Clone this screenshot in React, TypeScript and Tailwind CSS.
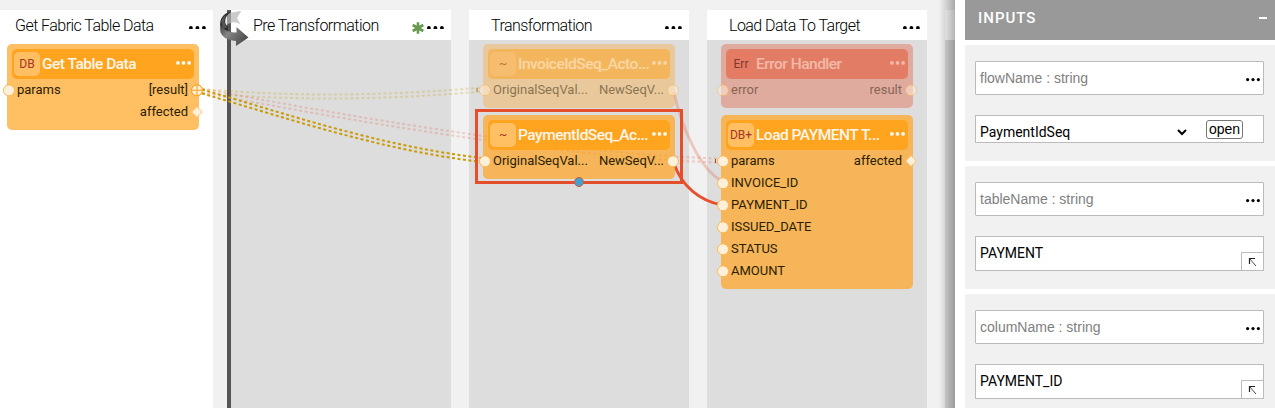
import React from "react";

type Port = { name: string; kind?: "circle" | "diamond" | "plus" };
type NodeProps = {
  badge: string;
  title: string;
  inputs: Port[];
  outputs: Port[];
  tone?: "orange" | "red";
  faded?: boolean;
};

function Dots({ className, r = 2, gap = 6 }: { className?: string; r?: number; gap?: number }) {
  const w = gap * 2 + r * 2;
  return (
    <svg className={className} width={w} height={r * 2} viewBox={`0 0 ${w} ${r * 2}`} fill="currentColor">
      <circle cx={r} cy={r} r={r} />
      <circle cx={r + gap} cy={r} r={r} />
      <circle cx={r + gap * 2} cy={r} r={r} />
    </svg>
  );
}

function PortMark({ kind = "circle" }: { kind?: Port["kind"] }) {
  return (
    <svg width="14" height="14" viewBox="0 0 14 14" className="shrink-0">
      {kind === "diamond" ? (
        <path d="M7 1.6 12.4 7 7 12.4 1.6 7Z" fill="#fff0dc" stroke="#ffb74e" strokeWidth="0.8" />
      ) : (
        <circle cx="7" cy="7.3" r="5.5" fill="#fff0dc" stroke="#ffb74e" strokeWidth="1" />
      )}
      {kind === "plus" && (
        <>
          <circle cx="7" cy="7.3" r="5.5" stroke="#ffa41f" fill="none" />
          <path d="M7 1.8V12.8M1.5 7.3H12.5" stroke="#ffa41f" strokeWidth="1.1" />
        </>
      )}
    </svg>
  );
}

const bodyFill = {
  orange: { solid: "bg-[rgba(255,164,31,0.7)]", faded: "bg-[rgba(255,164,31,0.35)]" },
  red: { solid: "bg-[rgba(229,78,43,0.7)]", faded: "bg-[rgba(229,78,43,0.35)]" },
};
const headFill = {
  orange: { solid: "bg-[#ffa41f]", faded: "bg-[rgba(255,164,31,0.5)]" },
  red: { solid: "bg-[#e54e2b]", faded: "bg-[rgba(229,78,43,0.5)]" },
};

function FlowNode({ badge, title, inputs, outputs, tone = "orange", faded }: NodeProps) {
  const state = faded ? "faded" : "solid";
  const dim = faded ? "opacity-50" : "";
  return (
    <div className={`relative z-10 w-[192px] rounded-[5px] px-[5px] pt-[5.5px] pb-[6.5px] ${bodyFill[tone][state]}`}>
      <div className={`flex h-[30px] items-center rounded-[5px] pl-[2px] pr-[3px] ${headFill[tone][state]}`}>
        <div
          className={`flex h-[24px] w-[26px] shrink-0 items-center justify-center rounded-[5px] text-[12px] ${
            tone === "red"
              ? "bg-[#ef7c60]/30 text-[#7c3a30]"
              : faded
                ? "bg-white/10 text-[#c4703a]"
                : "bg-white/30 text-[#a5352c]"
          }`}
        >
          {badge}
        </div>
        <div
          className={`ml-[2px] flex-1 whitespace-nowrap text-[15.5px] font-medium leading-[20px] tracking-[-0.5px] text-[#fff6ea] ${dim}`}
        >
          {title}
        </div>
        <Dots className={`mb-[2px] shrink-0 text-[#fff6ea] ${dim}`} r={1.9} gap={5.6} />
      </div>
      <div className={`-mx-[11px] flex justify-between text-[13px] leading-[22px] text-[#2b1d08] ${dim}`}>
        <div>
          {inputs.map((p) => (
            <div key={p.name} className="flex h-[22px] items-center gap-[1.5px] pl-[0.5px]">
              <PortMark kind={p.kind} />
              <span>{p.name}</span>
            </div>
          ))}
        </div>
        <div>
          {outputs.map((p) => (
            <div key={p.name} className="flex h-[22px] items-center justify-end gap-[2px] pr-[1px]">
              <span>{p.name}</span>
              <PortMark kind={p.kind} />
            </div>
          ))}
        </div>
      </div>
    </div>
  );
}

function Column({
  title,
  white,
  flagged,
  className,
  children,
}: {
  title: string;
  white?: boolean;
  flagged?: boolean;
  className?: string;
  children?: React.ReactNode;
}) {
  return (
    <div className={`flex w-[220px] shrink-0 flex-col ${white ? "bg-white" : "bg-[#ddd]"} ${className ?? ""}`}>
      <div className="flex h-[30px] shrink-0 items-center bg-white pl-[22px] pr-[7px] text-[16px] font-light tracking-[-0.54px] text-black">
        <span className="mt-[2px] flex-1 whitespace-nowrap">{title}</span>
        {flagged && (
          <svg width="14" height="14" viewBox="0 0 14 14" className="mr-[2px] mt-[6px]">
            <path d="M7 1.2V12.8M1.7 4 12.3 10M12.3 4 1.7 10" stroke="#67994f" strokeWidth="2.6" />
          </svg>
        )}
        <Dots className="mt-[5px] text-black" r={1.9} gap={6.5} />
      </div>
      <div className="flex flex-col gap-[7px] pl-[14px] pt-[3.5px]">{children}</div>
    </div>
  );
}

function Wires() {
  return (
    <svg className="pointer-events-none absolute left-0 top-0 z-[5]" width="955" height="408" fill="none">
      <g stroke="#c99b00" strokeWidth="2" strokeDasharray="3 2.5" opacity="0.25">
        <path d="M202 89C300 97.5 390 95.5 482 87.5" />
        <path d="M202 93C300 101.5 390 99.5 482 91.5" />
      </g>
      <g stroke="#e54e2b" strokeWidth="2" strokeDasharray="3 2.5" opacity="0.22">
        <path d="M202 88.5C330 113 560 154 719 158.5" />
        <path d="M202 92.5C330 117 560 158 719 162.5" />
      </g>
      <g stroke="#c99b00" strokeWidth="2" strokeDasharray="3 2.5">
        <path d="M202 89.5C290 115 380 146 482 158" />
        <path d="M202 93.5C290 119 380 150 482 162" />
      </g>
      <path d="M477 88v4" stroke="#9b8030" strokeWidth="1" />
      <path d="M715.5 159v4" stroke="#b04030" strokeWidth="1" />
      <path d="M674 92C681 126 700 170 722 181" stroke="#e54e2b" strokeWidth="3" opacity="0.25" />
      <path d="M674 163C681 186 700 201 722 205" stroke="#e84f2c" strokeWidth="2.8" />
    </svg>
  );
}

function LoopArrow() {
  return (
    <svg className="absolute left-[219px] top-[9px] z-20" width="31" height="38" viewBox="0 0 31 38">
      <defs>
        <linearGradient id="ribbon" x1="0" y1="0" x2="1" y2="0.6">
          <stop offset="0" stopColor="#3a3a3a" />
          <stop offset="0.4" stopColor="#858585" />
          <stop offset="1" stopColor="#4c4c4c" />
        </linearGradient>
      </defs>
      <path d="M22.3 2C17 3 12 3 8 5L8 16C12 12.5 17 12.5 21.5 15.5L18 9Z" fill="#b5b5b5" opacity="0.7" />
      <path d="M12 3C4 4 0.8 10 1.2 16C2.5 20 6 22 9 22L9 17.5C5 15 4.5 8 12 3Z" fill="#2f2f2f" />
      <path d="M2.2 12.5C2.6 10 4.5 7.5 7 6L5 12 8 19 4 19Z" fill="#555" />
      <path d="M1.2 14C3 20 9 24 17.5 23.5V18L29.5 28.5 17 37V32C7 31 1.5 27 1.2 21Z" fill="url(#ribbon)" />
    </svg>
  );
}

function InputGroup({ label, children }: { label: string; children: React.ReactNode }) {
  return (
    <section className="bg-[#f1f1f1] pl-[10px] pr-[11px] pt-4">
      <div className="mb-5 flex h-[34px] items-center justify-between rounded-[1px] border border-[#bbb] bg-white pl-1 pr-[3px] font-['Liberation_Sans',sans-serif] text-[14px] text-[#808080]">
        <span>{label}</span>
        <Dots className="mt-1 text-black" r={1.6} gap={5.4} />
      </div>
      {children}
    </section>
  );
}

function TextInput({ value }: { value: string }) {
  return (
    <div className="flex h-[35px] justify-between border border-[#bbb] bg-white pl-1">
      <span className="self-center text-[14px] text-black">{value}</span>
      <span className="flex h-[18px] w-[22px] items-center justify-center self-end border-l border-t border-[#bbb]">
        <svg width="9" height="10" viewBox="0 0 9 10" fill="none" stroke="#222">
          <path d="M1.5 7V1.5H7" strokeWidth="1.2" />
          <path d="M1.5 1.5 8 9" strokeWidth="0.8" />
        </svg>
      </span>
    </div>
  );
}

export default function App() {
  return (
    <div className="flex h-[408px] w-[1275px] overflow-hidden bg-white font-[Roboto,sans-serif]">
      <main className="relative flex w-[955px] shrink-0 overflow-hidden bg-[#f1f1f1] pt-[10px]">
        <Column title="Get Fabric Table Data" white className="-ml-[7px]">
          <FlowNode
            badge="DB"
            title="Get Table Data"
            inputs={[{ name: "params" }]}
            outputs={[{ name: "[result]", kind: "plus" }, { name: "affected", kind: "diamond" }]}
          />
        </Column>
        <div className="ml-[14px] w-1 shrink-0 bg-[#555]" />
        <Column title="Pre Transformation" flagged />
        <Column title="Transformation" className="ml-[18px]">
          <FlowNode
            badge="~"
            title="InvoiceIdSeq_Acto..."
            faded
            inputs={[{ name: "OriginalSeqVal..." }]}
            outputs={[{ name: "NewSeqV..." }]}
          />
          <FlowNode
            badge="~"
            title="PaymentIdSeq_Ac..."
            inputs={[{ name: "OriginalSeqVal..." }]}
            outputs={[{ name: "NewSeqV..." }]}
          />
        </Column>
        <Column title="Load Data To Target" className="ml-[18px]">
          <FlowNode
            badge="Err"
            title="Error Handler"
            tone="red"
            faded
            inputs={[{ name: "error" }]}
            outputs={[{ name: "result" }]}
          />
          <FlowNode
            badge="DB+"
            title="Load PAYMENT T..."
            inputs={[
              { name: "params" },
              { name: "INVOICE_ID" },
              { name: "PAYMENT_ID" },
              { name: "ISSUED_DATE" },
              { name: "STATUS" },
              { name: "AMOUNT" },
            ]}
            outputs={[{ name: "affected", kind: "diamond" }]}
          />
        </Column>
        <Column title="" className="ml-[18px]" />
        <Wires />
        <LoopArrow />
        <div className="absolute left-[475px] top-[109px] z-20 h-[75px] w-[208px] border-[3px] border-[#e54e2b]" />
        <div className="absolute left-[574px] top-[177px] z-20 size-[10px] rounded-full border border-[#d9573a] bg-[#42a0cc]" />
        <div className="absolute right-0 top-0 z-30 h-full w-[16px] bg-gradient-to-r from-black/0 to-black/30" />
      </main>
      <aside className="flex flex-1 flex-col gap-[5px] bg-white pl-[10px]">
        <header className="flex h-[40px] shrink-0 items-center justify-between bg-[#999] pl-[13px] pr-[8px] text-[15px] font-medium tracking-[1px] text-white">
          <span className="mb-[4px]">INPUTS</span>
          <span className="mb-[5px] h-[2px] w-[8px] bg-white" />
        </header>
        <div className="h-[116px] shrink-0 bg-[#f1f1f1]">
          <InputGroup label="flowName : string">
            <div className="flex h-[28px] items-center border border-[#bbb] bg-white pl-1">
              <span className="mt-[6px] w-[197px] text-[14px] text-black">PaymentIdSeq</span>
              <svg width="10" height="7" viewBox="0 0 10 7" className="mt-[6px]" fill="none" stroke="black" strokeWidth="2">
                <path d="M1 1 5 5 9 1" />
              </svg>
              <button className="ml-[19px] h-[19px] w-[37px] rounded-[3px] border border-[#767676] bg-white font-['Liberation_Sans',sans-serif] text-[14px] leading-[16px] text-black">
                open
              </button>
            </div>
          </InputGroup>
        </div>
        <div className="h-[123px] shrink-0 bg-[#f1f1f1]">
          <InputGroup label="tableName : string">
            <TextInput value="PAYMENT" />
          </InputGroup>
        </div>
        <div className="h-[123px] shrink-0 bg-[#f1f1f1]">
          <InputGroup label="columName : string">
            <TextInput value="PAYMENT_ID" />
          </InputGroup>
        </div>
      </aside>
    </div>
  );
}
